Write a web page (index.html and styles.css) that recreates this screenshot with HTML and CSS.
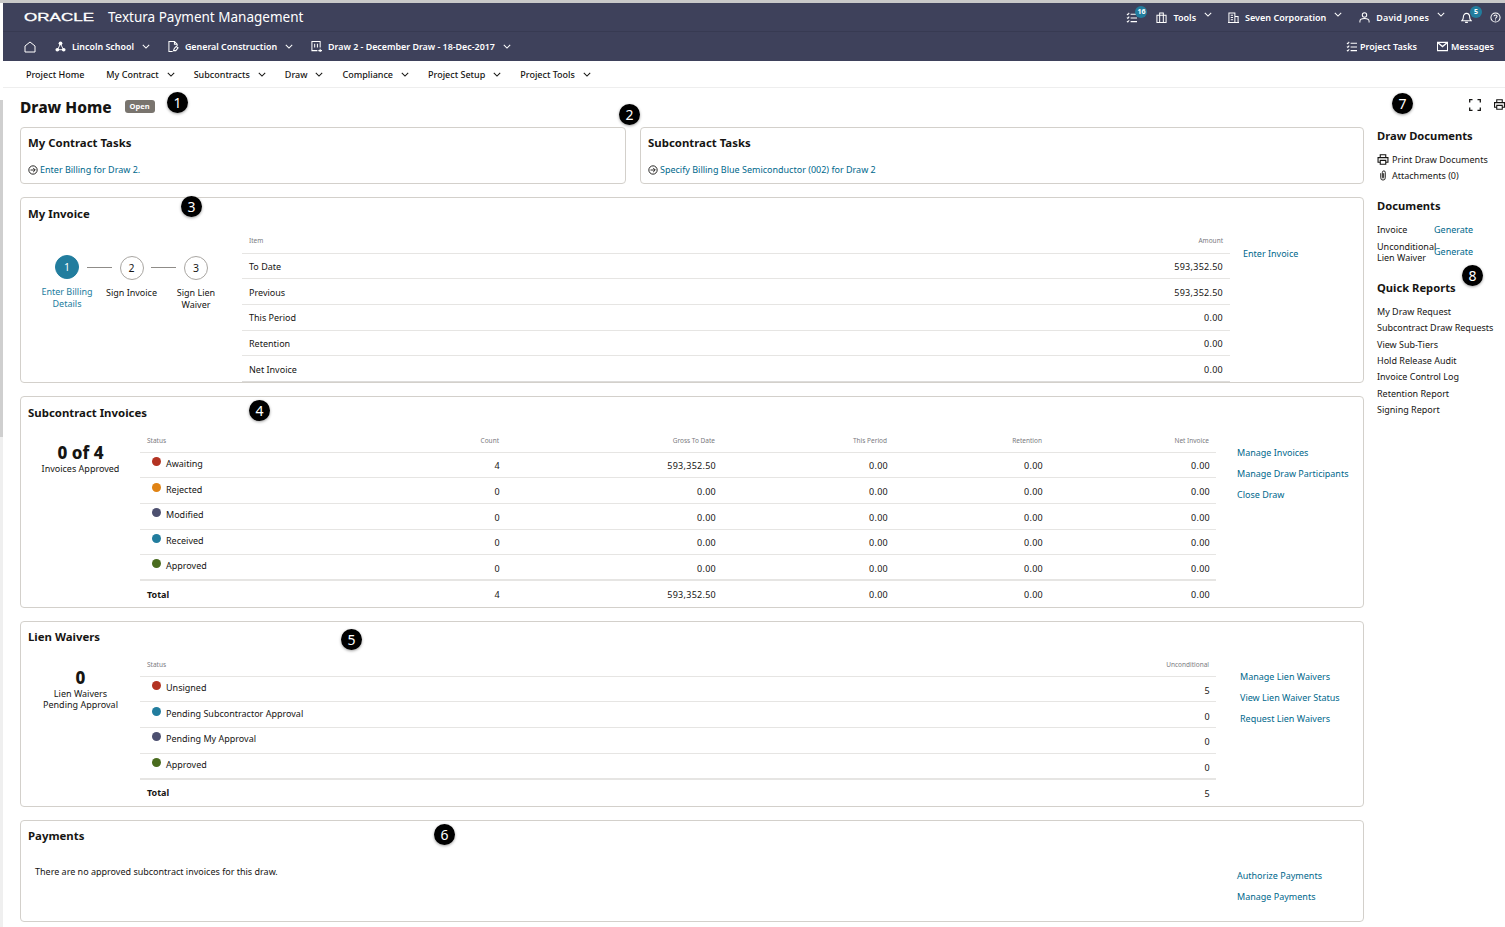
FILE: index.html
```html
<!DOCTYPE html>
<html lang="en">
<head>
    <meta charset="UTF-8">
    <title>Draw Home - Textura Payment Management</title>
    <link rel="stylesheet" href="styles.css">
</head>
<body>
    <svg class="sprite" width="0" height="0">
        <symbol id="i-chev" viewBox="0 0 10 6"><path d="M1 1l4 4 4-4" fill="none" stroke="currentColor" stroke-width="1.3"/></symbol>
        <symbol id="i-tasks" viewBox="0 0 12 12"><path d="M1 2l1 1 1.5-2M1 6l1 1 1.5-2M1 10l1 1 1.5-2M5 2.5h7M5 6.5h7M5 10.5h7" fill="none" stroke="currentColor" stroke-width="1.1"/></symbol>
        <symbol id="i-tools" viewBox="0 0 12 12"><path d="M1 3.5h10v8H1zM4 3.5V1h4v2.5M4 3.5v8M8 3.5v8" fill="none" stroke="currentColor" stroke-width="1.1"/></symbol>
        <symbol id="i-building" viewBox="0 0 12 12"><path d="M1 11.5V1h6.5v10.5M7.5 5H11v6.5M0 11.5h12M3 3.5h2.5M3 6h2.5M3 8.500h2.500" fill="none" stroke="currentColor" stroke-width="1.100"/></symbol>
        <symbol id="i-user" viewBox="0 0 12 12"><circle cx="6" cy="3.200" r="2.400" fill="none" stroke="currentColor" stroke-width="1.100"/><path d="M1 11.500V10c0-1.700 1.500-2.800 5-2.800s5 1.100 5 2.800v1.500" fill="none" stroke="currentColor" stroke-width="1.100"/></symbol>
        <symbol id="i-bell" viewBox="0 0 12 12"><path d="M1 9.500c1-1 1.500-1.500 1.500-3.500 0-2.500 1.500-4.500 3.500-4.500S9.500 3.500 9.500 6c0 2 .5 2.500 1.500 3.500zM4.500 11.300h3" fill="none" stroke="currentColor" stroke-width="1.200"/></symbol>
        <symbol id="i-help" viewBox="0 0 12 12"><circle cx="6" cy="6" r="5" fill="none" stroke="currentColor" stroke-width="1.100"/><path d="M4.300 4.700C4.400 3.700 5 3.200 6 3.200s1.700.6 1.700 1.500S6 6 6 7.300M6 8.200v1.200" fill="none" stroke="currentColor" stroke-width="1.100"/></symbol>
        <symbol id="i-home" viewBox="0 0 12 12"><path d="M1 11V5l5-4 5 4v6z" fill="none" stroke="currentColor" stroke-width="1"/></symbol>
        <symbol id="i-network" viewBox="0 0 12 12"><path d="M6 3L3 9M6 3l3 6M3 9.500h6" stroke="currentColor" fill="none"/><circle cx="6" cy="2.500" r="2" fill="currentColor"/><circle cx="2.500" cy="9.500" r="2" fill="currentColor"/><circle cx="9.500" cy="9.500" r="2" fill="currentColor"/></symbol>
        <symbol id="i-doc" viewBox="0 0 12 12"><path d="M5 11.500H1V.5h6l3 3v2M7 .5v3h3M6 10.500l1-2.500 2-2 2 1.500-2.500 3z" fill="none" stroke="currentColor" stroke-width="1.100"/></symbol>
        <symbol id="i-draw" viewBox="0 0 12 12"><path d="M7 10.500H1V.5h9v6.500M4 3v4M7 3v4M10 8.500v3.500M8 10.500h4" fill="none" stroke="currentColor" stroke-width="1.100"/></symbol>
        <symbol id="i-mail" viewBox="0 0 12 12"><path d="M.5 1.500h11v9H.5z" fill="none" stroke="currentColor" stroke-width="1.200"/><path d="M1 2l5 4 5-4" fill="none" stroke="currentColor" stroke-width="1.500"/></symbol>
        <symbol id="i-print" viewBox="0 0 12 12"><path d="M3 4V.8h6V4M3 9H.6V4h10.800v5H9M3 7h6v4.200H3z" fill="none" stroke="currentColor" stroke-width="1.200"/></symbol>
        <symbol id="i-clip" viewBox="0 0 12 12"><path d="M3.500 3.500v5a2.500 2.500 0 0 0 5 0V2.600a1.600 1.600 0 0 0-3.200 0v5.600a.7.700 0 0 0 1.400 0V3.500" fill="none" stroke="currentColor" stroke-width="1"/></symbol>
        <symbol id="i-expand" viewBox="0 0 12 12"><path d="M.7 3.500V.7h2.800M8.500.7h2.800v2.800M11.300 8.500v2.800H8.500M3.500 11.300H.7V8.500" fill="none" stroke="currentColor" stroke-width="1.300"/></symbol>
        <symbol id="i-go" viewBox="0 0 12 12"><circle cx="6" cy="6" r="5" fill="none" stroke="currentColor" stroke-width="1.100"/><path d="M3 6h5.500M6.200 3.500L8.700 6 6.200 8.500" fill="none" stroke="currentColor" stroke-width="1.100"/></symbol>
    </svg>

    <div class="scroll-strip"><div class="scroll-thumb"></div></div>

    <div class="app">
        <header class="topbar">
            <div class="topbar-row topbar-row-main">
                <svg class="oracle-logo" width="73" height="12"><text x="0" y="10" textLength="70" lengthAdjust="spacingAndGlyphs">ORACLE</text></svg>
                <span class="product">Textura Payment Management</span>
                <div class="spacer"></div>
                <span class="top-icon top-tasks"><svg class="ico"><use href="#i-tasks"/></svg><b class="badge">16</b></span>
                <span class="top-item top-tools"><svg class="ico"><use href="#i-tools"/></svg>Tools<svg class="chev"><use href="#i-chev"/></svg></span>
                <span class="top-item top-org"><svg class="ico"><use href="#i-building"/></svg>Seven Corporation<svg class="chev"><use href="#i-chev"/></svg></span>
                <span class="top-item top-user"><svg class="ico"><use href="#i-user"/></svg>David Jones<svg class="chev"><use href="#i-chev"/></svg></span>
                <span class="top-icon top-bell"><svg class="ico"><use href="#i-bell"/></svg><b class="badge">5</b></span>
                <span class="top-icon top-help"><svg class="ico"><use href="#i-help"/></svg></span>
            </div>
            <div class="topbar-row topbar-row-sub">
                <svg class="ico ico-home"><use href="#i-home"/></svg>
                <span class="crumb crumb-school"><svg class="ico"><use href="#i-network"/></svg>Lincoln School<svg class="chev"><use href="#i-chev"/></svg></span>
                <span class="crumb"><svg class="ico"><use href="#i-doc"/></svg>General Construction<svg class="chev"><use href="#i-chev"/></svg></span>
                <span class="crumb"><svg class="ico"><use href="#i-draw"/></svg>Draw 2 - December Draw - 18-Dec-2017<svg class="chev"><use href="#i-chev"/></svg></span>
                <div class="spacer"></div>
                <span class="sub-link sub-tasks"><svg class="ico"><use href="#i-tasks"/></svg>Project Tasks</span>
                <span class="sub-link sub-messages"><svg class="ico"><use href="#i-mail"/></svg>Messages</span>
            </div>
        </header>

        <nav class="menu">
            <span class="menu-item menu-home">Project Home</span>
            <span class="menu-item">My Contract<svg class="chev"><use href="#i-chev"/></svg></span>
            <span class="menu-item">Subcontracts<svg class="chev"><use href="#i-chev"/></svg></span>
            <span class="menu-item">Draw<svg class="chev"><use href="#i-chev"/></svg></span>
            <span class="menu-item">Compliance<svg class="chev"><use href="#i-chev"/></svg></span>
            <span class="menu-item">Project Setup<svg class="chev"><use href="#i-chev"/></svg></span>
            <span class="menu-item">Project Tools<svg class="chev"><use href="#i-chev"/></svg></span>
        </nav>

        <div class="page">
            <main class="content">
                <div class="title-row">
                    <h1>Draw Home</h1>
                    <span class="status-pill">Open</span>
                </div>

                <div class="task-row">
                    <section class="card task-card task-mine">
                        <h2>My Contract Tasks</h2>
                        <a class="task-link"><svg class="ico"><use href="#i-go"/></svg>Enter Billing for Draw 2.</a>
                    </section>
                    <section class="card task-card task-sub">
                        <h2>Subcontract Tasks</h2>
                        <a class="task-link"><svg class="ico"><use href="#i-go"/></svg>Specify Billing Blue Semiconductor (002) for Draw 2</a>
                    </section>
                </div>

                <section class="card invoice-card">
                    <h2>My Invoice</h2>
                    <div class="invoice-body">
                        <div class="steps">
                            <div class="step step-active">
                                <span class="step-dot">1</span>
                                <span class="step-label">Enter Billing Details</span>
                            </div>
                            <div class="step-line"></div>
                            <div class="step">
                                <span class="step-dot">2</span>
                                <span class="step-label">Sign Invoice</span>
                            </div>
                            <div class="step-line"></div>
                            <div class="step">
                                <span class="step-dot">3</span>
                                <span class="step-label">Sign Lien Waiver</span>
                            </div>
                        </div>
                        <table class="data invoice-table">
                            <thead><tr><th>Item</th><th class="num">Amount</th></tr></thead>
                            <tbody>
                                <tr><td>To Date</td><td class="num">593,352.50</td></tr>
                                <tr><td>Previous</td><td class="num">593,352.50</td></tr>
                                <tr><td>This Period</td><td class="num">0.00</td></tr>
                                <tr><td>Retention</td><td class="num">0.00</td></tr>
                                <tr><td>Net Invoice</td><td class="num">0.00</td></tr>
                            </tbody>
                        </table>
                        <div class="side-links invoice-links"><a>Enter Invoice</a></div>
                    </div>
                </section>

                <section class="card sub-card">
                    <h2>Subcontract Invoices</h2>
                    <div class="split">
                        <div class="stat">
                            <strong>0 of 4</strong>
                            <span>Invoices Approved</span>
                        </div>
                        <table class="data status-table sub-table">
                            <colgroup><col><col class="col-count"><col class="col-gross"><col class="col-period"><col class="col-ret"><col class="col-net"></colgroup>
                            <thead><tr><th>Status</th><th class="num">Count</th><th class="num">Gross To Date</th><th class="num">This Period</th><th class="num">Retention</th><th class="num">Net Invoice</th></tr></thead>
                            <tbody>
                                <tr><td class="status"><i class="dot dot-red"></i>Awaiting</td><td class="num">4</td><td class="num">593,352.50</td><td class="num">0.00</td><td class="num">0.00</td><td class="num">0.00</td></tr>
                                <tr><td class="status"><i class="dot dot-orange"></i>Rejected</td><td class="num">0</td><td class="num">0.00</td><td class="num">0.00</td><td class="num">0.00</td><td class="num">0.00</td></tr>
                                <tr><td class="status"><i class="dot dot-slate"></i>Modified</td><td class="num">0</td><td class="num">0.00</td><td class="num">0.00</td><td class="num">0.00</td><td class="num">0.00</td></tr>
                                <tr><td class="status"><i class="dot dot-teal"></i>Received</td><td class="num">0</td><td class="num">0.00</td><td class="num">0.00</td><td class="num">0.00</td><td class="num">0.00</td></tr>
                                <tr><td class="status"><i class="dot dot-green"></i>Approved</td><td class="num">0</td><td class="num">0.00</td><td class="num">0.00</td><td class="num">0.00</td><td class="num">0.00</td></tr>
                            </tbody>
                            <tfoot><tr><td>Total</td><td class="num">4</td><td class="num">593,352.50</td><td class="num">0.00</td><td class="num">0.00</td><td class="num">0.00</td></tr></tfoot>
                        </table>
                        <div class="side-links sub-links">
                            <a>Manage Invoices</a>
                            <a>Manage Draw Participants</a>
                            <a>Close Draw</a>
                        </div>
                    </div>
                </section>

                <section class="card lien-card">
                    <h2>Lien Waivers</h2>
                    <div class="split">
                        <div class="stat">
                            <strong>0</strong>
                            <span>Lien Waivers<br>Pending Approval</span>
                        </div>
                        <table class="data status-table lien-table">
                            <thead><tr><th>Status</th><th class="num">Unconditional</th></tr></thead>
                            <tbody>
                                <tr><td class="status"><i class="dot dot-red"></i>Unsigned</td><td class="num">5</td></tr>
                                <tr><td class="status"><i class="dot dot-teal"></i>Pending Subcontractor Approval</td><td class="num">0</td></tr>
                                <tr><td class="status"><i class="dot dot-slate"></i>Pending My Approval</td><td class="num">0</td></tr>
                                <tr><td class="status"><i class="dot dot-green"></i>Approved</td><td class="num">0</td></tr>
                            </tbody>
                            <tfoot><tr><td>Total</td><td class="num">5</td></tr></tfoot>
                        </table>
                        <div class="side-links lien-links">
                            <a>Manage Lien Waivers</a>
                            <a>View Lien Waiver Status</a>
                            <a>Request Lien Waivers</a>
                        </div>
                    </div>
                </section>

                <section class="card pay-card">
                    <h2>Payments</h2>
                    <div class="pay-body">
                        <p>There are no approved subcontract invoices for this draw.</p>
                        <div class="side-links pay-links">
                            <a>Authorize Payments</a>
                            <a>Manage Payments</a>
                        </div>
                    </div>
                </section>
            </main>

            <aside class="sidebar">
                <div class="side-tools">
                    <svg class="ico ico-expand"><use href="#i-expand"/></svg>
                    <svg class="ico"><use href="#i-print"/></svg>
                </div>
                <h3>Draw Documents</h3>
                <div class="doc-line"><svg class="ico"><use href="#i-print"/></svg>Print Draw Documents</div>
                <div class="doc-line"><svg class="ico"><use href="#i-clip"/></svg>Attachments (0)</div>
                <h3 class="h-docs">Documents</h3>
                <div class="gen-row"><span>Invoice</span><a>Generate</a></div>
                <div class="gen-row gen-row-tall"><span>Unconditional Lien Waiver</span><a>Generate</a></div>
                <h3 class="h-reports">Quick Reports</h3>
                <ul class="reports">
                    <li>My Draw Request</li>
                    <li>Subcontract Draw Requests</li>
                    <li>View Sub-Tiers</li>
                    <li>Hold Release Audit</li>
                    <li>Invoice Control Log</li>
                    <li>Retention Report</li>
                    <li>Signing Report</li>
                </ul>
            </aside>
        </div>
    </div>

    <!-- numbered callouts sit on top of the screen -->
    <span class="callout c1">1</span>
    <span class="callout c2">2</span>
    <span class="callout c3">3</span>
    <span class="callout c4">4</span>
    <span class="callout c5">5</span>
    <span class="callout c6">6</span>
    <span class="callout c7">7</span>
    <span class="callout c8">8</span>
</body>
</html>
```
FILE: styles.css
```css
* {
    margin: 0;
    padding: 0;
    box-sizing: border-box;
}

html, body {
    height: 927px;
    overflow: hidden;
}

body {
    font-family: "Noto Sans", sans-serif;
    font-size: 9px;
    color: #161513;
    background: #fff;
    display: flex;
    position: relative;
    border-top: 3px solid #c9c9c9;
}

.sprite {
    position: absolute;
}

a {
    color: #00688c;
}

.scroll-strip {
    width: 3px;
    flex: none;
    background: #efefef;
}

.scroll-thumb {
    height: 434px;
    border-top: 97px solid #fff;
    background: #cfcfcf;
}

.app {
    flex: 1;
    min-width: 0;
}

.ico {
    width: 11px;
    height: 11px;
    flex: none;
}

.chev {
    width: 8px;
    height: 5px;
    flex: none;
}

.spacer {
    flex: 1;
}

/* top bar */
.topbar {
    background: #3e415b;
    color: #fff;
    height: 58px;
}

.topbar-row {
    display: flex;
    align-items: center;
    height: 29px;
}

.topbar-row-main {
    padding-left: 21px;
    border-bottom: 1px solid #373a52;
}

.oracle-logo {
    fill: #fff;
    stroke: #fff;
    stroke-width: 0.3px;
    font-family: "Liberation Sans", sans-serif;
    font-size: 11.5px;
    flex: none;
}

.product {
    margin-left: 11px;
    font-size: 13.5px;
}

.top-item, .crumb, .sub-link {
    display: flex;
    align-items: center;
    font-weight: 600;
}

.crumb {
    font-size: 8.9px;
}

.top-item .ico, .crumb .ico {
    margin-right: 6px;
}

.top-item .chev, .crumb .chev {
    margin-left: 8px;
}

.top-item .chev {
    margin-top: -5px;
}

.top-icon {
    position: relative;
    display: flex;
}

.badge {
    position: absolute;
    left: 9px;
    top: -6px;
    width: 12px;
    height: 12px;
    border-radius: 50%;
    background: #227d9e;
    font-size: 7px;
    line-height: 12px;
    text-align: center;
}

.top-tools { margin-left: 19px; }
.top-org { margin-left: 16px; }
.top-user { margin-left: 17px; letter-spacing: 0.15px; }
.top-bell { margin-left: 16px; }
.top-help { margin: 0 4px 0 18px; }

.topbar-row-sub {
    padding-left: 21px;
}

.ico-home {
    width: 12px;
    height: 12px;
}

.crumb {
    margin-left: 18px;
}

.crumb-school {
    margin-left: 19px;
}

.sub-link .ico {
    margin-right: 3px;
}

.sub-tasks { margin-right: 20px; }
.sub-messages { margin-right: 11px; }

/* menu */
.menu {
    display: flex;
    align-items: center;
    height: 27px;
    padding-left: 23px;
    gap: 19px;
    border-bottom: 1px solid #eeeeee;
}

.menu-item {
    display: flex;
    align-items: center;
    gap: 8px;
    font-weight: 500;
}

.menu-home {
    margin-right: 3px;
}

/* page */
.page {
    display: flex;
}

.content {
    width: 1361px;
    flex: none;
    padding-left: 17px;
}

.title-row {
    display: flex;
    align-items: center;
    height: 39px;
    padding-bottom: 2px;
    gap: 13px;
}

h1 {
    font-size: 15.5px;
    font-weight: 800;
}

.status-pill {
    background: #79746e;
    color: #fff;
    font-size: 7.5px;
    font-weight: 700;
    padding: 0 5px;
    height: 13px;
    line-height: 13px;
    border-radius: 3px;
}

.card {
    border: 1px solid #d3d0cb;
    border-radius: 4px;
    margin-bottom: 13px;
    padding: 0 7px;
}

h2 {
    font-size: 11.4px;
    font-weight: 700;
    line-height: 16px;
    padding-top: 7px;
}

.invoice-card h2, .sub-card h2 {
    padding-top: 8px;
    margin-bottom: -1px;
}

.task-row {
    display: flex;
    gap: 14px;
}

.task-card {
    height: 57px;
}

.task-mine { width: 606px; }
.task-sub { flex: 1; }

.task-link {
    display: flex;
    align-items: center;
    gap: 2px;
    margin-top: 12px;
}

.task-link .ico {
    width: 10px;
    height: 10px;
    color: #161513;
}

/* my invoice */
.invoice-card {
    height: 186px;
}

.invoice-body {
    display: flex;
    margin-left: -7px;
}

.steps {
    width: 221px;
    flex: none;
    display: flex;
    align-items: flex-start;
    padding: 34px 0 0 14px;
}

.step {
    width: 64px;
    flex: none;
    text-align: center;
    display: flex;
    flex-direction: column;
    align-items: center;
    gap: 7px;
}

.step + .step-line + .step {
    padding-top: 1px;
    margin-left: 0.5px;
}

.step-dot {
    width: 24px;
    height: 24px;
    border: 1px solid #a9a6a2;
    border-radius: 50%;
    font-size: 10.5px;
    line-height: 22px;
}

.step-active .step-dot {
    background: #227d9e;
    border-color: #227d9e;
    color: #fff;
}

.step-active .step-label {
    color: #227d9e;
}

.step-label {
    line-height: 11.5px;
    width: 58px;
}

.step-line {
    width: 0;
    height: 1px;
    flex: none;
    position: relative;
    top: 12px;
}

.step-line::before {
    content: "";
    display: block;
    width: 25px;
    height: 1px;
    margin-left: -12.5px;
    background: #8f8c88;
}

.data {
    border-collapse: collapse;
    table-layout: fixed;
}

.data th {
    font-size: 6.5px;
    font-weight: 400;
    color: #7a7a80;
    text-align: left;
    padding: 0 7px;
}

.data td {
    padding: 0 7px;
    border-top: 1px solid #e6e5e3;
}

.data .num {
    text-align: right;
}

.data td.num {
    letter-spacing: 0.27px;
}

.invoice-table {
    width: 988px;
    flex: none;
    margin-top: 7px;
    border-bottom: 1px solid #dddcda;
}

.invoice-table th { height: 25px; }
.invoice-table td { height: 25.7px; padding-top: 1px; }

.side-links {
    display: flex;
    flex-direction: column;
    align-items: flex-start;
}

.invoice-links {
    padding: 26px 0 0 13px;
}

/* subcontract invoices, lien waivers */
.split {
    display: flex;
    margin-left: -7px;
}

.stat {
    width: 119px;
    flex: none;
    text-align: center;
    line-height: 11px;
}

.stat strong {
    display: block;
    font-size: 17px;
    font-weight: 800;
    line-height: 21px;
}

.status-table {
    width: 1076px;
    flex: none;
}

.status-table th { height: 22px; }
.sub-table th { height: 23px; }
.status-table td { height: 25.7px; }

.status-table tfoot td {
    border-top: 2px solid #e6e5e3;
    height: 26px;
    padding-top: 1px;
}

.status-table tfoot td:first-child {
    font-weight: 700;
}

.status-table .status {
    padding-left: 12px;
    padding-bottom: 3px;
}

.status-table td.num {
    padding-top: 3px;
    padding-right: 6px;
}

.sub-table td.num {
    padding-top: 2px;
}

.col-count { width: 200px; }
.col-gross { width: 216px; }
.col-period { width: 172px; }
.col-ret { width: 155px; }
.col-net { width: 167px; }

.dot {
    display: inline-block;
    width: 9px;
    height: 9px;
    border-radius: 50%;
    margin-right: 5px;
    position: relative;
    top: -1px;
}

.dot-red { background: #b33322; }
.dot-orange { background: #e08314; }
.dot-slate { background: #4d5070; }
.dot-teal { background: #227d9e; }
.dot-green { background: #4a6c1f; }

.sub-card {
    height: 212px;
}

.sub-card .split, .lien-card .split {
    margin-top: 9px;
}

.sub-card .stat, .lien-card .stat {
    padding-top: 13px;
}

.sub-links {
    padding: 18px 0 0 21px;
    gap: 9px;
    line-height: 12px;
}

.lien-card {
    height: 186px;
}

.lien-links {
    padding: 17px 0 0 24px;
    gap: 9px;
    line-height: 12px;
}

.pay-card {
    height: 102px;
}

.pay-body {
    display: flex;
    justify-content: space-between;
    padding: 21px 0 0 7px;
}

.pay-links {
    width: 119px;
    flex: none;
    padding-top: 5px;
    gap: 9px;
    line-height: 12px;
}

/* right column */
.sidebar {
    padding-left: 13px;
    flex: 1;
    min-width: 0;
    white-space: nowrap;
}

.side-tools {
    display: flex;
    justify-content: flex-end;
    gap: 13px;
    height: 39px;
    padding-top: 11px;
}

.ico-expand {
    width: 12px;
    height: 12px;
}

h3 {
    font-size: 11.2px;
    font-weight: 700;
    line-height: 16px;
    margin-top: 1px;
    margin-bottom: 7px;
}

.h-docs { margin-top: 15px; }
.h-reports { margin-top: 15px; margin-bottom: 8px; }

.doc-line {
    display: flex;
    align-items: center;
    gap: 3px;
    height: 16px;
}

.doc-line .ico {
    width: 12px;
    height: 11px;
}

.gen-row {
    display: flex;
    height: 16px;
    align-items: center;
}

.gen-row span {
    width: 57px;
    flex: none;
    white-space: normal;
    line-height: 11px;
}

.gen-row-tall {
    height: 28px;
}

.gen-row-tall span {
    padding-top: 2px;
}

.reports {
    list-style: none;
    line-height: 16.35px;
}

/* callouts */
.callout {
    position: absolute;
    width: 21px;
    height: 21px;
    border-radius: 50%;
    background: #000;
    color: #fff;
    font-size: 14px;
    line-height: 21px;
    text-align: center;
    box-shadow: 0 1px 3px rgba(0, 0, 0, 0.4);
}

.c1 { left: 167px; top: 89px; }
.c2 { left: 619px; top: 101px; }
.c3 { left: 181px; top: 193px; }
.c4 { left: 249px; top: 397px; }
.c5 { left: 341px; top: 626px; }
.c6 { left: 434px; top: 821px; }
.c7 { left: 1392px; top: 90px; }
.c8 { left: 1462px; top: 262px; }
```
